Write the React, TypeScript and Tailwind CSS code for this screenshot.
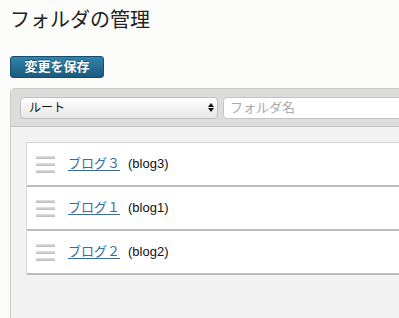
const folders = [
  { name: 'ブログ３', slug: 'blog3' },
  { name: 'ブログ１', slug: 'blog1' },
  { name: 'ブログ２', slug: 'blog2' },
];

const Handle = () => (
  <div className="flex w-[19px] flex-col gap-[4px]">
    <span className="h-[3px] bg-gradient-to-b from-[#e2e2e2] to-[#b9b9b9]" />
    <span className="h-[3px] bg-gradient-to-b from-[#e2e2e2] to-[#b9b9b9]" />
    <span className="h-[3px] bg-gradient-to-b from-[#e2e2e2] to-[#b9b9b9]" />
  </div>
);

const App = () => {
  return (
    <div
      className="h-[318px] w-[399px] overflow-hidden bg-[#fcfcfa] pl-[10px] pt-[7px]"
      style={{ fontFamily: '"Liberation Sans", "Noto Sans CJK JP", sans-serif' }}
    >
      <h1 className="text-[20px] leading-[26px] text-[#222]">フォルダの管理</h1>
      <button className="mt-[23px] flex h-[22px] w-[94px] items-center justify-center rounded-[3px] border border-[#164d6c] bg-gradient-to-b from-[#3184ad] to-[#1b5a7e] text-[13px] font-bold text-white [text-shadow:0_-1px_0_rgba(0,0,0,0.4)]">
        変更を保存
      </button>
      <div className="mt-[10px] w-[420px] rounded-tl-[5px] border-l border-t border-[#c9c9c9]">
        <div className="flex h-[38px] items-center gap-[5px] border-b border-[#c4c4c4] bg-[#dcdcdc] pl-[9px]">
          <div className="flex h-[22px] w-[198px] items-center rounded-[4px] border border-[#c0c0c0] bg-gradient-to-b from-[#ffffff] to-[#e6e6e6]">
            <span className="flex-1 pl-[8px] text-[12px] text-[#111]">ルート</span>
            <span className="flex h-full w-[13px] flex-col items-center justify-center gap-[1px] text-[#111]">
              <svg width="6" height="4" viewBox="0 0 6 4"><path d="M0 4 L3 0 L6 4 Z" fill="currentColor" /></svg>
              <svg width="6" height="4" viewBox="0 0 6 4"><path d="M0 0 L3 4 L6 0 Z" fill="currentColor" /></svg>
            </span>
          </div>
          <div className="flex h-[22px] flex-1 items-center rounded-l-[4px] border border-[#c4c4c4] bg-white pl-[6px] text-[13px] text-[#aaa]">
            フォルダ名
          </div>
        </div>
        <div className="h-[200px] bg-[#f2f2f2] pl-[15px] pt-[15px]">
          <div className="border-l border-t border-[#d6d6d6] bg-white">
            {folders.map((f) => (
              <div
                key={f.slug}
                className="flex h-[44px] items-center border-b-2 border-[#bcbcbc] pl-[9px]"
              >
                <Handle />
                <a className="ml-[13px] text-[13px] text-[#3a6d9c] underline underline-offset-2" href="#">
                  {f.name}
                </a>
                <span className="ml-[8px] text-[13px] text-[#111]">({f.slug})</span>
              </div>
            ))}
          </div>
        </div>
      </div>
    </div>
  );
};

export default App;
